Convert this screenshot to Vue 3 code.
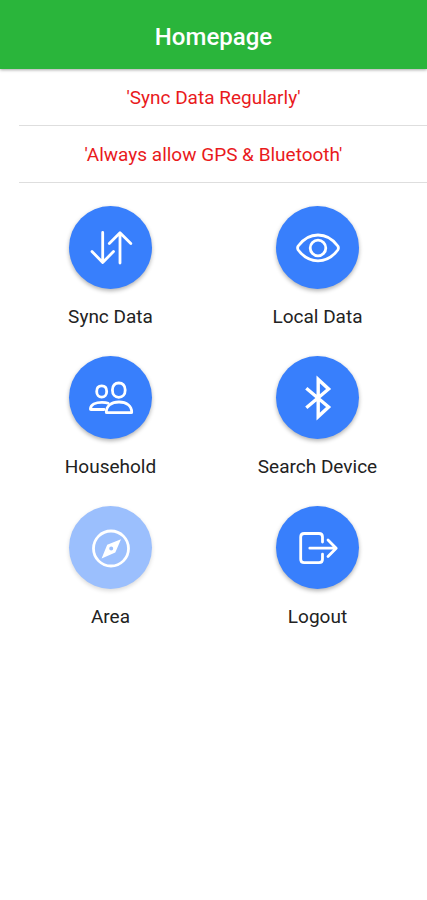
<template>
    <div class="page">
        <header class="toolbar">
            <h1>Homepage</h1>
        </header>
        <ul class="notices">
            <li v-for="notice in notices" :key="notice">{{ notice }}</li>
        </ul>
        <main class="menu">
            <button
                v-for="item in items"
                :key="item.label"
                type="button"
                class="menu-item"
                :disabled="item.disabled"
            >
                <span class="fab">
                    <svg viewBox="0 0 48 48" :class="{ sharp: item.sharp }" aria-hidden="true">
                        <path v-for="d in item.lines" :key="d" :d="d" />
                        <path v-if="item.solid" class="solid" :d="item.solid" />
                    </svg>
                </span>
                <span class="label">{{ item.label }}</span>
            </button>
        </main>
    </div>
</template>

<script setup>
const notices = ["'Sync Data Regularly'", "'Always allow GPS & Bluetooth'"]

const items = [
    {
        label: "Sync Data",
        lines: [
            "M15.7 8.5V38M5 27.5L15.7 38.5L26.5 27.5",
            "M33 39V9M22.3 19.5L33 8.8L43.8 19.5"
        ]
    },
    {
        label: "Local Data",
        lines: [
            "M4.2 22C9 15.5 16 11 24 11S39 15.5 43.8 22Q45 24 43.8 26C39 32.3 32 36.8 24 36.8S9 32.3 4.2 26Q3 24 4.2 22Z",
            "M16.2 24a7.8 7.8 0 1 0 15.6 0a7.8 7.8 0 1 0 -15.6 0Z"
        ]
    },
    {
        label: "Household",
        lines: [
            "M25.4 16C25.4 11.5 28 9 31.8 9S38.2 11.5 38.2 16S35.5 23.3 31.8 23.3S25.4 20.5 25.4 16Z",
            "M19.3 38.2C19.3 32 24.3 28 32 28S44.7 32 44.7 38.2Q44.7 38.7 44.2 38.7H19.8Q19.3 38.7 19.3 38.2Z",
            "M9.7 17.4C9.7 13.8 11.7 11.8 14.7 11.8S19.7 13.8 19.7 17.4S17.6 23.2 14.7 23.2S9.7 21 9.7 17.4Z",
            "M21.2 29.2C19.5 28.5 17.5 28.3 15 28.3C8.5 28.3 3.7 30.8 3.4 35Q3.4 35.5 4 35.5H17"
        ]
    },
    {
        label: "Search Device",
        sharp: true,
        lines: ["M12.3 14.3L34.6 33L24.2 42.6V5.4L34.6 15L12.3 33.7"]
    },
    {
        label: "Area",
        disabled: true,
        lines: ["M6.5 24.5a17.5 17.5 0 1 0 35 0a17.5 17.5 0 1 0 -35 0Z"],
        solid: "M34 15.2L28.3 28.6L14.6 34.4L20.2 20.8ZM24.2 22.6a2 2 0 1 0 0 4a2 2 0 1 0 0 -4Z"
    },
    {
        label: "Logout",
        lines: [
            "M28.5 18V13Q28.5 9.5 25 9.5H10.2Q6.7 9.5 6.7 13V35.2Q6.7 38.7 10.2 38.7H25Q28.5 38.7 28.5 35.2V30.2",
            "M15.8 24.2H42M34 16L42.2 24.2L34 32.4"
        ]
    }
]
</script>

<style>
body {
    margin: 0;
    background: #fff;
}
</style>

<style scoped>
.page {
    font-family: Roboto, "Liberation Sans", sans-serif;
    color: #222;
}

.toolbar {
    display: flex;
    justify-content: center;
    padding: 22px 16px 17px;
    background: #2ab53b;
    box-shadow: 0 1px 3px rgba(0, 0, 0, 0.35);
}

.toolbar h1 {
    margin: 0;
    font-size: 24px;
    font-weight: 500;
    line-height: 30px;
    color: #fff;
}

.notices {
    margin: 0;
    padding: 0;
    list-style: none;
}

.notices li {
    margin-left: 19px;
    padding: 17px 19px 15px 0;
    border-bottom: 1px solid #dedede;
    font-size: 19px;
    line-height: 24px;
    text-align: center;
    color: #e91a1c;
}

.menu {
    display: grid;
    grid-template-columns: 1fr 1fr;
    row-gap: 27px;
    padding: 23px 6px 23px 7px;
}

.menu-item {
    display: flex;
    flex-direction: column;
    align-items: center;
    gap: 16px;
    padding: 0;
    border: 0;
    background: none;
    font: inherit;
    color: inherit;
    cursor: pointer;
}

.fab {
    display: flex;
    align-items: center;
    justify-content: center;
    width: 83px;
    height: 83px;
    border-radius: 50%;
    background: #387ffc;
    box-shadow: 0 2px 4px rgba(0, 0, 0, 0.3);
}

.fab svg {
    width: 48px;
    height: 48px;
    fill: none;
    stroke: #fff;
    stroke-width: 2.8;
    stroke-linecap: round;
    stroke-linejoin: round;
}

.fab svg.sharp {
    stroke-width: 3.4;
    stroke-linecap: butt;
    stroke-linejoin: miter;
}

.fab .solid {
    fill: #fff;
    fill-rule: evenodd;
    stroke: none;
}

.label {
    font-size: 19px;
    line-height: 24px;
}

.menu-item:disabled {
    cursor: default;
}

.menu-item:disabled .fab {
    background: #9bbffd;
    box-shadow: 0 2px 4px rgba(0, 0, 0, 0.15);
}
</style>
